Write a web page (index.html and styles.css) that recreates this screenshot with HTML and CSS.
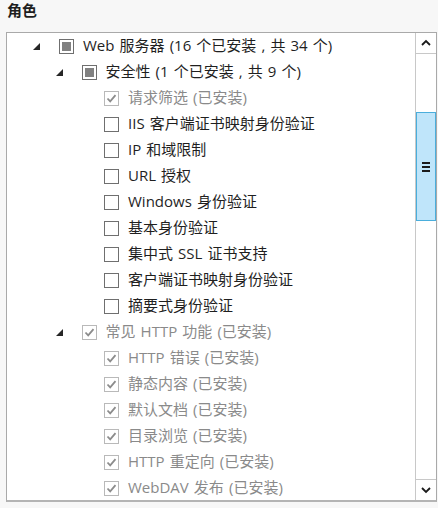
FILE: index.html
```html
<!DOCTYPE html>
<html lang="zh">
<head>
<meta charset="utf-8">
<link rel="stylesheet" href="styles.css">
</head>
<body>
<div class="title">角色</div>
<div class="frame">
  <div class="tree">
    <div class="row l0"><span class="tog"><i class="tri"></i></span><span class="cb ind"></span><span class="lbl">Web 服务器 (16 个已安装 , 共 34 个)</span></div>
    <div class="row l1"><span class="tog"><i class="tri"></i></span><span class="cb ind"></span><span class="lbl">安全性 (1 个已安装 , 共 9 个)</span></div>
    <div class="row l2 dis"><span class="tog"></span><span class="cb chk"><svg viewBox="0 0 15 15"><path d="M3.5 7.5 L6.2 10.4 L11.5 4.2" /></svg></span><span class="lbl">请求筛选 (已安装)</span></div>
    <div class="row l2"><span class="tog"></span><span class="cb"></span><span class="lbl">IIS 客户端证书映射身份验证</span></div>
    <div class="row l2"><span class="tog"></span><span class="cb"></span><span class="lbl">IP 和域限制</span></div>
    <div class="row l2"><span class="tog"></span><span class="cb"></span><span class="lbl">URL 授权</span></div>
    <div class="row l2"><span class="tog"></span><span class="cb"></span><span class="lbl">Windows 身份验证</span></div>
    <div class="row l2"><span class="tog"></span><span class="cb"></span><span class="lbl">基本身份验证</span></div>
    <div class="row l2"><span class="tog"></span><span class="cb"></span><span class="lbl">集中式 SSL 证书支持</span></div>
    <div class="row l2"><span class="tog"></span><span class="cb"></span><span class="lbl">客户端证书映射身份验证</span></div>
    <div class="row l2"><span class="tog"></span><span class="cb"></span><span class="lbl">摘要式身份验证</span></div>
    <div class="row l1 dis"><span class="tog"><i class="tri"></i></span><span class="cb chk"><svg viewBox="0 0 15 15"><path d="M3.5 7.5 L6.2 10.4 L11.5 4.2" /></svg></span><span class="lbl">常见 HTTP 功能 (已安装)</span></div>
    <div class="row l2 dis"><span class="tog"></span><span class="cb chk"><svg viewBox="0 0 15 15"><path d="M3.5 7.5 L6.2 10.4 L11.5 4.2" /></svg></span><span class="lbl">HTTP 错误 (已安装)</span></div>
    <div class="row l2 dis"><span class="tog"></span><span class="cb chk"><svg viewBox="0 0 15 15"><path d="M3.5 7.5 L6.2 10.4 L11.5 4.2" /></svg></span><span class="lbl">静态内容 (已安装)</span></div>
    <div class="row l2 dis"><span class="tog"></span><span class="cb chk"><svg viewBox="0 0 15 15"><path d="M3.5 7.5 L6.2 10.4 L11.5 4.2" /></svg></span><span class="lbl">默认文档 (已安装)</span></div>
    <div class="row l2 dis"><span class="tog"></span><span class="cb chk"><svg viewBox="0 0 15 15"><path d="M3.5 7.5 L6.2 10.4 L11.5 4.2" /></svg></span><span class="lbl">目录浏览 (已安装)</span></div>
    <div class="row l2 dis"><span class="tog"></span><span class="cb chk"><svg viewBox="0 0 15 15"><path d="M3.5 7.5 L6.2 10.4 L11.5 4.2" /></svg></span><span class="lbl">HTTP 重定向 (已安装)</span></div>
    <div class="row l2 dis"><span class="tog"></span><span class="cb chk"><svg viewBox="0 0 15 15"><path d="M3.5 7.5 L6.2 10.4 L11.5 4.2" /></svg></span><span class="lbl">WebDAV 发布 (已安装)</span></div>
  </div>
  <div class="sbar">
    <div class="sbtn"><svg viewBox="0 0 20 20"><path d="M6 12 L10 8 L14 12" /></svg></div>
    <div class="strack">
      <div class="sgap1"></div>
      <div class="thumb"><span></span><span></span><span></span></div>
      <div class="sgap2"></div>
    </div>
    <div class="sbtn"><svg viewBox="0 0 20 20"><path d="M6 8 L10 12 L14 8" /></svg></div>
  </div>
</div>
</body>
</html>
```
FILE: styles.css
```css
html, body {
  margin: 0;
  padding: 0;
  background: #f7f7f7;
  font-family: "Open Sans", "Noto Sans CJK SC", sans-serif;
}
.title {
  height: 32px;
  padding-left: 7px;
  font-size: 15px;
  font-weight: bold;
  color: #1e1e1e;
  line-height: 20px;
}
.frame {
  margin-left: 6px;
  width: 431px;
  height: 470px;
  box-sizing: border-box;
  border: 1px solid #a9a9a9;
  border-bottom: 2px solid #b4b4b4;
  background: #fff;
  display: flex;
  overflow: hidden;
}
.tree {
  flex: 1;
  overflow: hidden;
}
.row {
  height: 26px;
  display: flex;
  align-items: center;
  font-size: 15px;
  word-spacing: 1.2px;
  color: #1f1f1f;
  white-space: nowrap;
}
.row.l0 { padding-left: 22px; }
.row.l1 { padding-left: 44.5px; }
.row.l2 { padding-left: 67px; }
.row.dis { color: #8a8a8a; }
.tog {
  width: 30px;
  height: 26px;
  position: relative;
  flex: none;
}
.tri {
  position: absolute;
  left: 4px;
  top: 10px;
  width: 0;
  height: 0;
  border-left: 7px solid transparent;
  border-bottom: 7px solid #262626;
}
.cb {
  width: 15px;
  height: 15px;
  box-sizing: border-box;
  border: 1px solid #6f6f6f;
  background: #fff;
  margin-right: 9px;
  flex: none;
  position: relative;
}
.cb.ind::after {
  content: "";
  position: absolute;
  left: 2px;
  top: 2px;
  width: 9px;
  height: 9px;
  background: #818181;
}
.cb.chk {
  border-color: #b9b9b9;
}
.cb.chk svg {
  position: absolute;
  left: -1px;
  top: -1px;
  width: 15px;
  height: 15px;
}
.cb.chk path {
  fill: none;
  stroke: #8c8c8c;
  stroke-width: 1.8;
}
.lbl {
  line-height: 20px;
  position: relative;
  top: -1px;
}
.sbar {
  width: 21px;
  flex: none;
  display: flex;
  flex-direction: column;
  border-left: 1px solid #c8c8c8;
  box-sizing: border-box;
}
.sbtn {
  height: 20px;
  flex: none;
  border-bottom: 1px solid #c8c8c8;
  display: flex;
  align-items: center;
  justify-content: center;
}
.sbtn:last-child {
  border-bottom: none;
  border-top: 1px solid #c8c8c8;
}
.sbtn svg {
  width: 20px;
  height: 20px;
}
.sbtn path {
  fill: none;
  stroke: #1a1a1a;
  stroke-width: 1.8;
}
.strack {
  flex: 1;
  display: flex;
  flex-direction: column;
}
.sgap1 { height: 58px; }
.thumb {
  height: 109px;
  box-sizing: border-box;
  background: #bfe5fa;
  border: 1px solid #4aaedc;
  display: flex;
  flex-direction: column;
  align-items: center;
  justify-content: center;
  gap: 2px;
}
.thumb span {
  width: 8px;
  height: 2px;
  background: #1a1a1a;
}
.sgap2 { flex: 1; }
```
